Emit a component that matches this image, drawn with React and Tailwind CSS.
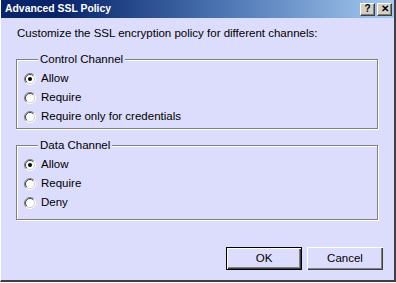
import React from 'react';

const Radio = ({ checked }) => (
  <svg width="12" height="12" viewBox="0 0 12 12" className="shrink-0">
    <circle cx="6" cy="6" r="5" fill="#ffffff" />
    <path d="M2.1 9.9 A5.5 5.5 0 0 1 9.9 2.1" fill="none" stroke="#808080" strokeWidth="1" />
    <path d="M9.9 2.1 A5.5 5.5 0 0 1 2.1 9.9" fill="none" stroke="#ffffff" strokeWidth="1" />
    <path d="M2.8 9.2 A4.5 4.5 0 0 1 9.2 2.8" fill="none" stroke="#404040" strokeWidth="1" />
    <path d="M9.2 2.8 A4.5 4.5 0 0 1 2.8 9.2" fill="none" stroke="#d4d0c8" strokeWidth="1" />
    {checked && <circle cx="6" cy="6" r="2" fill="#000000" />}
  </svg>
);

const Option = ({ label, checked }) => (
  <div className="flex items-center h-[19px] gap-[5px]">
    <Radio checked={checked} />
    <span>{label}</span>
  </div>
);

const Group = ({ title, options, className }) => (
  <fieldset
    className={`border border-[#808080] pl-[7px] shadow-[inset_1px_1px_0_#ffffff,1px_1px_0_#ffffff] ${className}`}
  >
    <legend className="px-[2px] ml-[14px] leading-[13px] bg-[#dcdcfc]">{title}</legend>
    <div className="flex flex-col mt-[3px]">
      {options.map((o, i) => (
        <Option key={o} label={o} checked={i === 0} />
      ))}
    </div>
  </fieldset>
);

const CaptionButton = ({ children }) => (
  <div className="w-[15px] h-[13px] bg-[#d4d0c8] border-t border-l border-white border-r border-b border-r-[#404040] border-b-[#404040] shadow-[inset_-1px_-1px_0_#808080] flex items-center justify-center text-[10px] font-bold leading-none text-black">
    {children}
  </div>
);

export default function App() {
  return (
    <div className="w-[396px] h-[283px] bg-white" style={{ fontFamily: '"Liberation Sans", Arial, sans-serif' }}>
      <div className="w-[396px] h-[282px] bg-[#dcdcfc] border-r-2 border-b-2 border-[#404040] border-l border-l-white flex flex-col text-[11.5px] text-black">
        <div className="h-[18px] flex items-center justify-between pl-[4px] pr-[2px] bg-gradient-to-r from-[#0a246a] from-[15%] via-[#4a72b0] via-[55%] to-[#a6caf0]">
          <span className="text-white font-bold text-[10.4px]">Advanced SSL Policy</span>
          <div className="flex gap-[2px]">
            <CaptionButton>?</CaptionButton>
            <CaptionButton>✕</CaptionButton>
          </div>
        </div>
        <div className="flex flex-col px-[15px] flex-1">
          <p className="mt-[9px] ml-[1px] leading-[13px]">Customize the SSL encryption policy for different channels:</p>
          <Group
            title="Control Channel"
            options={['Allow', 'Require', 'Require only for credentials']}
            className="mt-[13px] h-[76px] mr-[1px]"
          />
          <Group
            title="Data Channel"
            options={['Allow', 'Require', 'Deny']}
            className="mt-[10px] h-[81px] mr-[1px]"
          />
          <div className="flex justify-end gap-[5px] mt-auto mb-[10px] mr-[-4px]">
            <button className="w-[76px] h-[23px] border border-black bg-[#dcdcfc] shadow-[inset_1px_1px_0_#ffffff,inset_-1px_-1px_0_#404040,inset_-2px_-2px_0_#808080] text-[11.5px]">
              OK
            </button>
            <button className="w-[76px] h-[23px] bg-[#dcdcfc] shadow-[inset_1px_1px_0_#ffffff,inset_-1px_-1px_0_#404040,inset_-2px_-2px_0_#808080] text-[11.5px]">
              Cancel
            </button>
          </div>
        </div>
      </div>
    </div>
  );
}
